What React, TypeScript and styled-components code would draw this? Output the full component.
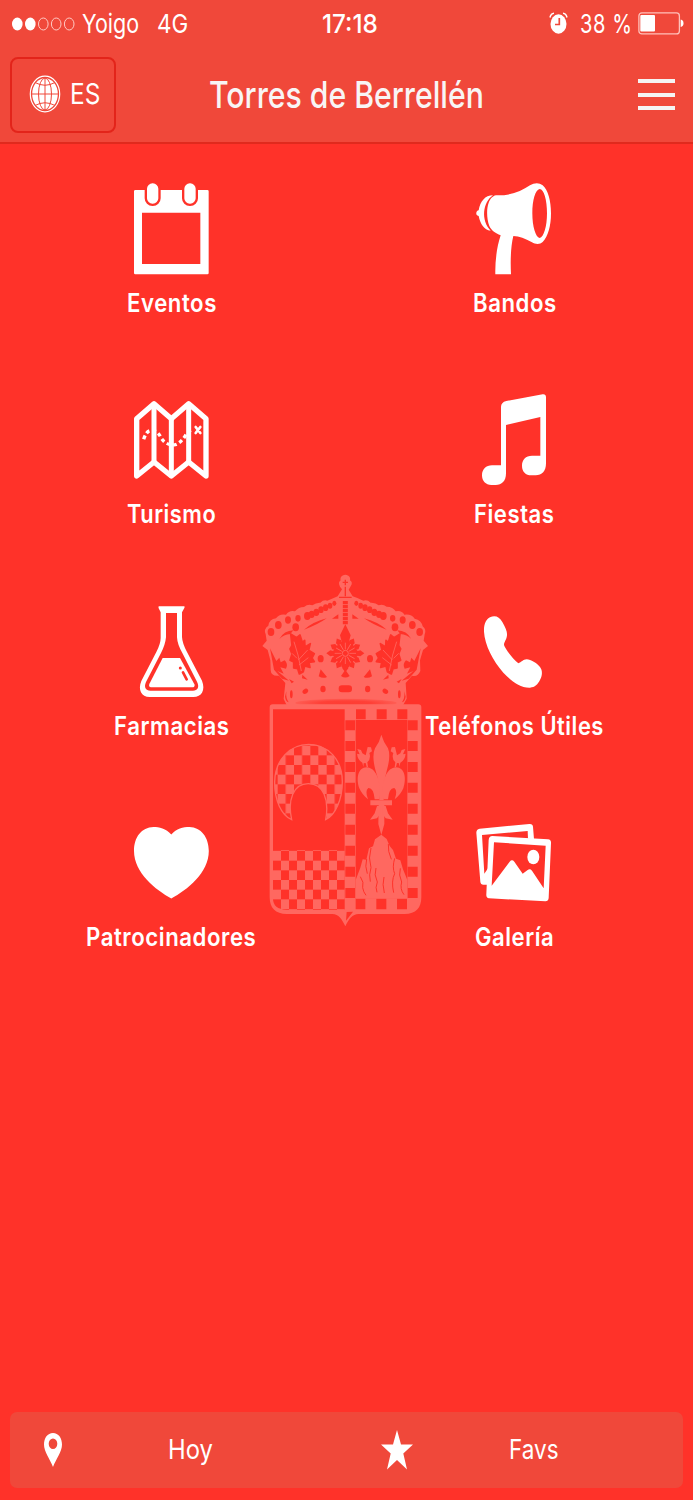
import React, { useLayoutEffect, useRef, useState } from "react";
import styled, { createGlobalStyle } from "styled-components";

const RED = "#ff3229";
const BAR = "#f0483a";
const CREST = "#ff6860";

const GlobalStyle = createGlobalStyle`
  * { box-sizing: border-box; }
  body {
    margin: 0;
    background: ${RED};
    color: #fff;
    font-family: Inter, "Liberation Sans", sans-serif;
  }
`;

const Screen = styled.div`
  position: relative;
  display: flex;
  flex-direction: column;
  width: 693px;
  height: 1500px;
  overflow: hidden;
  background: ${RED};
`;

const Header = styled.header`
  height: 144px;
  background: ${BAR};
  border-bottom: 2px solid #e02a1d;
`;

const StatusBar = styled.div`
  display: grid;
  grid-template-columns: 1fr 56px 1fr;
  align-items: center;
  height: 47px;
  padding: 0 9px 0 12px;
`;

const StatusGroup = styled.div<{ $end?: boolean }>`
  display: flex;
  align-items: center;
  justify-content: ${(p) => (p.$end ? "flex-end" : "flex-start")};
`;

const Signal = styled.svg`
  margin-right: 7px;
`;

const Carrier = styled.div`
  display: flex;
  gap: 18px;
`;

const Clock = styled.div`
  margin-left: 2px;
`;

const Charge = styled.div`
  margin: 0 6px 0 12px;
`;

const NavBar = styled.div`
  display: flex;
  align-items: center;
  justify-content: space-between;
  height: 95px;
  padding: 0 18px 0 10px;
`;

const LangButton = styled.button`
  display: flex;
  align-items: center;
  gap: 9px;
  width: 106px;
  height: 76px;
  padding: 0 0 2px 17px;
  border: 2px solid #e3241a;
  border-radius: 8px;
  background: transparent;
  color: inherit;
  font-family: inherit;
`;

const Title = styled.h1`
  margin: 0 0 0 -61px;
  color: #f8f5f5;
`;

const MenuButton = styled.div`
  display: flex;
  flex-direction: column;
  gap: 9.5px;
  width: 37px;
`;

const MenuLine = styled.span`
  height: 4px;
  background: #f5f3f3;
`;

const Grid = styled.main`
  position: relative;
  display: grid;
  grid-template-columns: 342.7px 342.7px;
  grid-auto-rows: 211.3px;
  padding-top: 37px;
  flex: 1;
  align-content: start;
`;

const Item = styled.div`
  display: flex;
  flex-direction: column;
  align-items: center;
  gap: 9px;
`;

const Icon = styled.svg`
  width: 80px;
  height: 96px;
  fill: #fff;
`;

const CrestMark = styled.svg`
  position: absolute;
  left: 250px;
  top: 565px;
  width: 190px;
  height: 375px;
`;

const TabBar = styled.nav`
  display: grid;
  grid-template-columns: 1fr 1fr;
  height: 76px;
  margin: 0 10px 12px;
  padding-bottom: 2px;
  border-radius: 7px;
  background: ${BAR};
`;

const Tab = styled.div<{ $pad: number; $gap: number }>`
  display: flex;
  align-items: center;
  gap: ${(p) => p.$gap}px;
  padding-left: ${(p) => p.$pad}px;

  svg {
    margin-top: 1px;
  }
`;

const TextBox = styled.span<{ $w: number; $size: number; $weight: number; $track: number }>`
  display: block;
  width: ${(p) => p.$w}px;
  height: 34px;
  line-height: 34px;
  font-size: ${(p) => p.$size}px;
  font-weight: ${(p) => p.$weight};
  letter-spacing: ${(p) => p.$track}em;
  white-space: nowrap;
`;

const Stretched = styled.span`
  display: inline-block;
  transform-origin: 0 50%;
`;

type TallTextProps = { w: number; size: number; weight?: number; track?: number; children: string };

// condensed text: the glyphs are squeezed until the line is exactly `w` wide
const TallText = ({ w, size, weight = 400, track = 0, children }: TallTextProps) => {
  const ref = useRef<HTMLSpanElement>(null);
  const [scale, setScale] = useState(1);

  useLayoutEffect(() => {
    if (ref.current) setScale(w / (ref.current.offsetWidth - track * size));
  }, [w, size, track, children]);

  return (
    <TextBox $w={w} $size={size} $weight={weight} $track={track}>
      <Stretched ref={ref} style={{ transform: `scaleX(${scale})` }}>
        {children}
      </Stretched>
    </TextBox>
  );
};

const Calendar = () => (
  <Icon viewBox="153 33 240 288">
    <path fillRule="evenodd" d="M166 60H382Q386 60 386 64V309Q386 313 382 313H166Q162 313 162 309V64Q162 60 166 60ZM186 128V282H361V128Z" />
    <g stroke={RED} strokeWidth="7">
      <rect x="197.500" y="36.500" width="41" height="68" rx="20" />
      <rect x="309.500" y="36.500" width="41" height="68" rx="20" />
    </g>
  </Icon>
);

const Megaphone = () => (
  <Icon viewBox="162 33 240 288">
    <path
      fillRule="evenodd"
      d="M228 76C272 77 302 65 330 46C343 38 357 37 368 46C384 60 393 92 393 130C393 168 384 200 368 216C360 224 346 223 336 217C315 205 298 199 280 198C272 230 271 275 273 313H226C225 275 230 232 242 196C226 190 213 180 208 168C200 148 199 116 206 98C211 87 217 78 228 76ZM359 57C346 60 337 90 337 130C337 170 347 202 359 204C371 202 381 170 381 130C381 90 372 58 359 57Z"
    />
    <path d="M219 76C188 96 182 152 212 182C192 180 181 162 176 138C170 137 168 133 169 129C169 125 172 122 176 121C181 94 195 76 219 76Z" />
  </Icon>
);

const TreasureMap = () => (
  <Icon viewBox="153 22 240 288">
    <g fill="none" stroke="#fff" strokeLinejoin="round" strokeLinecap="round">
      <path strokeWidth="16" d="M170 102L222 57L274 102L326 57L378 102V274L326 232L274 274L222 232L170 274Z" />
      <path strokeWidth="15" d="M222 60V230M274 104V272M326 60V230" />
      <path strokeWidth="10" strokeLinecap="butt" strokeDasharray="11 9" d="M191 164Q199 140 210 138Q232 134 244 161Q260 184 286 180Q304 174 318 150Q328 135 340 135" />
      <path strokeWidth="8" d="M347 127L361 145M361 127L347 145" />
    </g>
  </Icon>
);

const Music = () => (
  <Icon viewBox="162 22 240 288">
    <path d="M259 49L368 29Q378 28 378 38V236C378 260 366 272 347 272H334C317 272 306 261 306 243C306 225 317 213 336 213H361V97L258 121V266C258 290 245 301 227 301H214C197 301 186 289 186 272C186 254 198 242 216 242H243V67Q243 53 259 49Z" />
  </Icon>
);

const Flask = () => (
  <Icon viewBox="153 26 240 288">
    <path
      fillRule="evenodd"
      d="M237 33H312Q316 33 313 38L306 51V125Q307 144 321 170L366 256C377 284 365 305 340 305H209C184 305 173 283 184 257L229 170Q242 145 242 128V51L236 39Q234 33 237 33ZM258 53V126Q256 148 243 173L198 260C191 276 197 286 211 286H339C353 286 359 275 351 259L307 173Q292 147 291 126V53Z"
    />
    <path d="M248 188H300L344 268Q344 276 337 276H213Q205 275 208 266Z" />
    <g stroke={RED} strokeLinecap="round" fill={RED}>
      <path strokeWidth="8" d="M309 231L320 252" />
      <circle cx="301" cy="218" r="4.500" stroke="none" />
    </g>
  </Icon>
);

const Phone = () => (
  <Icon viewBox="162 11 240 288">
    <path d="M210 51C225 44 238 49 247 65C257 83 262 93 261 105C260 118 252 125 252 134C255 145 278 175 295 189C304 186 309 177 320 177C333 178 350 188 360 200C368 211 367 224 361 237C353 253 345 261 330 262C300 263 274 241 250 217C219 181 194 134 192 94C191 70 199 56 210 51Z" />
  </Icon>
);

const Heart = () => (
  <Icon viewBox="0 0 80 96">
    <path d="M40.300 19.500C35 13.500 28 12 22.500 12C10.500 12.500 3 22 3 36C3 58 25 75 40.300 83.500C56 75 77.800 58 77.800 36C77.800 22 70 12.500 58.500 12C52 12 45.500 13.500 40.300 19.500Z" />
  </Icon>
);

const Gallery = () => (
  <Icon viewBox="162 15 240 288">
    <path d="M179 56L328 42Q338 41 339 50L342 88L324 86L323 63L186 75L193 191L206 172L202 224L190 224Q182 224 181 215L169 68Q169 57 179 56Z" />
    <path fillRule="evenodd" d="M217 78L384 88Q394 89 393 100L386 264Q385 274 376 274L207 265Q198 264 199 253L206 90Q207 78 217 78ZM222 97L215 227L269 155Q276 147 283 155L308 191L323 180Q330 175 336 182L371 235L377 107Z" />
    <ellipse cx="340" cy="141" rx="18" ry="22" />
  </Icon>
);

const Globe = () => (
  <svg width="32" height="38" viewBox="0 0 32 38">
    <ellipse cx="16" cy="19" rx="14.700" ry="17.800" fill="none" stroke="#fff" strokeWidth="1.200" />
    <ellipse cx="16" cy="19" rx="12.800" ry="15.800" fill="#fff" />
    <g fill="none" stroke={BAR} strokeWidth="1">
      <path d="M16 2V36M2 19H30M6 7.500Q16 13 26 7.500M6 30.500Q16 25 26 30.500" />
      <ellipse cx="16" cy="19" rx="6.500" ry="16" />
    </g>
  </svg>
);

const AlarmClock = () => (
  <svg width="19" height="23" viewBox="0 0 19 23">
    <ellipse cx="9.500" cy="12" rx="8" ry="9.700" fill="#fff" />
    <path d="M1 5.500Q2 1.500 5 1.300M18 5.500Q17 1.500 14 1.300" fill="none" stroke="#fff" strokeWidth="1.500" />
    <path d="M10.300 6V12.500H6" fill="none" stroke={BAR} strokeWidth="1.700" />
  </svg>
);

const Battery = () => (
  <svg width="46" height="23" viewBox="0 0 46 23">
    <rect x="0.900" y="0.900" width="40.500" height="21" rx="3" fill="none" stroke="#ffc0b9" strokeWidth="1.300" />
    <rect x="2.300" y="3" width="14.700" height="16.500" rx="1" fill="#fff" />
    <path d="M42.700 7.500Q45.500 8 45.500 11.300T42.700 15Z" fill="#fff" />
  </svg>
);

const petals = [0, 30, 60, 90, 120, 150, 180, 210, 240, 270, 300, 330];
const beads = [[63, 201, 10], [85, 180, 10], [114, 165, 9], [144, 160, 8], [137, 187, 10], [172, 153, 10], [185, 148, 9], [199, 142, 9], [213, 134, 8], [227, 128, 8], [240, 122, 7], [253, 115, 6]];
const studs = [-59, 3, 66, 128, 191, 254, 317, 380, 444];

const HalfCrown = () => (
  <g fill={RED}>
    {beads.map(([x, y, r]) => (
      <ellipse key={x} cx={x} cy={y} rx={r} ry={r + 2} />
    ))}
    <path d="M88 222Q102 197 130 196L121 207Q101 208 88 222ZM162 194Q190 170 230 160Q202 180 162 194ZM246 161L265 148V161Z" />
    <path stroke={RED} strokeWidth="5" strokeLinejoin="round" d="M122 207L140 218L150 210L157 232L164 226L165 246L181 236L176 256L193 266L186 279L193 290L177 292L180 307L164 303L160 320L148 327L143 311L131 309V291L120 286L126 267L120 252L126 241Z" />
    <path d="M60 250L79 288L88 278L92 292L104 286Q116 298 108 311L91 307L101 326L82 318L117 347L96 341L72 314Z" />
    <ellipse cx="212" cy="281" rx="9" ry="11" />
    <path d="M212 313L231 336Q219 342 206 334ZM157 329L173 344L156 340ZM117 342L132 350L125 355Z" />
    <ellipse cx="219" cy="372" rx="8" ry="10" />
    <ellipse cx="166" cy="379" rx="9" ry="7" transform="rotate(-35 166 379)" />
    <ellipse cx="124" cy="388" rx="4" ry="12" />
    <path d="M109 379Q107 400 116 412Q107 409 105 395Z" />
    <g stroke={CREST} strokeWidth="2.500" fill="none">
      <path d="M154 318L144 270L132 230M145 285L173 255M147 300L175 278M141 280L126 265" />
    </g>
  </g>
);

const HalfField = () => (
  <g>
    <path d="M390 165C392 120 377 83 350 82C323 82 318 117 328 145Q336 164 354 178Q344 153 355 144Q371 143 374 178H388Z" />
    <path d="M322 27L333 30L337 40L347 46L353 21L363 22L366 34L358 39Q364 56 352 67L354 81H350L347 69L341 70L340 81L337 68Q323 60 321 41L329 43Z" />
    <path d="M381 198L374 220L360 239L381 235L391 221V198Z" />
  </g>
);

const Crest = () => (
  <CrestMark viewBox="0 0 570 1125">
    <defs>
      <pattern id="checks" x="69" y="333" width="48" height="58" patternUnits="userSpaceOnUse">
        <path fill={CREST} d="M0 0H24V29H0zM24 29H48V58H24z" />
      </pattern>
      <pattern id="moonChecks" x="83" y="17" width="49" height="58" patternUnits="userSpaceOnUse">
        <path fill={CREST} d="M24 0H49V29H24zM0 29H24V58H0z" />
      </pattern>
      <radialGradient id="rim">
        <stop offset="0" stopColor="#ff3c33" />
        <stop offset="0.5" stopColor="#ff4037" />
        <stop offset="1" stopColor="#ff5d54" />
      </radialGradient>
    </defs>

    {/* crown */}
    <path
      fill={CREST}
      d="M286 29C298 30 302 38 300 46Q310 52 302 64L296 74L308 94Q328 101 340 107Q352 103 362 113Q377 112 386 121Q398 116 410 125Q429 125 437 139Q455 135 463 149Q484 146 494 161Q514 165 518 184Q530 193 524 208L521 227L534 243L519 255L510 286L511 318Q503 337 486 332L467 354L470 401L459 421H110L101 402L106 354L87 332Q63 335 62 315L61 286L53 255L37 243L50 227L47 208Q40 192 55 182Q58 163 78 160Q88 145 108 149Q118 135 135 139Q146 126 162 126Q174 116 187 121Q199 112 211 113Q221 103 232 107Q248 101 263 94L276 73L270 65Q263 52 272 46C270 38 274 30 286 29Z"
    />
    <path d="M286 44V61M278 52H294M286 65V94M267 97H305" fill="none" stroke={RED} strokeWidth="4" />
    <HalfCrown />
    <g transform="translate(572 0) scale(-1 1)">
      <HalfCrown />
    </g>
    <path d="M286 108V178" stroke={RED} strokeWidth="15" strokeDasharray="10 2" />
    <g fill={RED}>
      {petals.map((a) => (
        <path key={a} transform={`translate(286 265) rotate(${a}) scale(1 ${a % 90 === 0 ? 1 : 0.9})`} d="M0 0L-9 -25L-14 -31L-7 -37L-9 -45L0 -57L9 -45L7 -37L14 -31L9 -25Z" />
      ))}
      <path d="M286 178L302 211L294 240H278L270 211ZM286 314L299 333Q286 342 273 333ZM275 286H297L298 304L286 318L274 304Z" />
      <rect x="266" y="361" width="40" height="21" rx="10" />
    </g>
    <g stroke={CREST} strokeWidth="2.500">
      {petals.map((a) => (
        <path key={a} transform={`translate(286 265) rotate(${a})`} d="M0 -12V-32" />
      ))}
    </g>
    <circle cx="286" cy="265" r="9" fill={RED} stroke={CREST} strokeWidth="3" />
    <ellipse cx="288" cy="414" rx="152" ry="13" fill="url(#rim)" />

    {/* shield */}
    <g transform="translate(0 525)">
      <path
        fill={CREST}
        d="M59 -98Q59 -107 68 -107H505Q514 -107 514 -98V472C514 504 498 522 464 522H326C307 522 296 538 286 559C276 538 266 522 247 522H110C76 522 59 504 59 472Z"
      />
      <path fill={RED} d="M69 -92H284V331H69zM317 -60H472V475H317zM290 516L309 515L288 542Z" />
      <path fill={RED} d="M69 331H284V509H110Q69 509 69 475Z" />
      <path fill="url(#checks)" d="M69 331H284V509H110Q69 509 69 475Z" />
      <g fill={RED}>
        {studs.map((y) => (
          <path key={y} d={`M286 ${y}H315V${y + 30}H286zM473 ${y}H503V${y + 30}H473z`} />
        ))}
        <path d="M318 -92H347V-62H318zM380 -92H410V-62H380zM442 -92H472V-62H442z" />
      </g>
      <path fill={RED} d="M317 475H346V508H317zM379 475H409V508H379zM441 475H471V508H441z" />

      <path
        fill="url(#moonChecks)"
        stroke={CREST}
        strokeWidth="4"
        d="M125 239C94 226 73 180 74 125C75 60 120 13 176 13C235 13 277 60 277 125C277 180 255 226 227 239C238 180 221 131 175 131C130 131 112 180 125 239Z"
      />

      <g fill={CREST}>
        <path d="M394 -16Q400 5 414 25Q423 47 411 89Q401 122 401 180H388Q388 122 376 89Q365 47 375 25Q389 5 394 -16ZM361 181H426V196H361zM386 196H403V252L394 285L385 252Z" />
        <HalfField />
        <g transform="translate(788 0) scale(-1 1)">
          <HalfField />
        </g>
        <path d="M394 284L410 297L419 318L429 330L438 356L451 361L459 388L472 420V476H317V420L331 383L338 358L349 359L357 325L369 319L375 298Z" />
      </g>
      <g fill="none" stroke={RED} strokeWidth="3">
        <path d="M350 357Q344 379 352 401M363 324Q354 354 363 383Q356 405 361 425M415 312Q413 334 424 358M434 355Q426 383 434 401Q423 423 431 458M451 385Q445 405 455 426Q449 447 462 464M378 384Q371 404 382 426Q375 443 381 457M402 411Q396 433 403 459M331 410Q343 427 338 443Q340 456 348 466" />
      </g>
    </g>
  </CrestMark>
);

const items = [
  { label: "Eventos", w: 89, icon: <Calendar /> },
  { label: "Bandos", w: 83, icon: <Megaphone /> },
  { label: "Turismo", w: 89, icon: <TreasureMap /> },
  { label: "Fiestas", w: 80, icon: <Music /> },
  { label: "Farmacias", w: 115, icon: <Flask /> },
  { label: "Teléfonos Útiles", w: 178, icon: <Phone /> },
  { label: "Patrocinadores", w: 170, icon: <Heart /> },
  { label: "Galería", w: 79, icon: <Gallery /> },
];

const App = () => (
  <Screen>
    <GlobalStyle />
    <Crest />

    <Header>
      <StatusBar>
        <StatusGroup>
          <Signal width="63" height="14" viewBox="0 0 63 14">
            {[5.3, 18.3, 31.3, 44.2, 57.2].map((x, i) => (
              <ellipse key={x} cx={x} cy="7" rx={i < 2 ? 5.3 : 4.8} ry={i < 2 ? 6.5 : 6} fill={i < 2 ? "#fff" : "none"} stroke="#ffc9c3" strokeWidth={i < 2 ? 0 : 1} />
            ))}
          </Signal>
          <Carrier>
            <TallText w={57} size={26}>Yoigo</TallText>
            <TallText w={31} size={26}>4G</TallText>
          </Carrier>
        </StatusGroup>
        <Clock>
          <TallText w={56} size={26} weight={500}>17:18</TallText>
        </Clock>
        <StatusGroup $end>
          <AlarmClock />
          <Charge>
            <TallText w={52} size={26} track={0.03}>38 %</TallText>
          </Charge>
          <Battery />
        </StatusGroup>
      </StatusBar>

      <NavBar>
        <LangButton>
          <Globe />
          <TallText w={30} size={28.500}>ES</TallText>
        </LangButton>
        <Title>
          <TallText w={275} size={37} weight={500}>Torres de Berrellén</TallText>
        </Title>
        <MenuButton>
          <MenuLine />
          <MenuLine />
          <MenuLine />
        </MenuButton>
      </NavBar>
    </Header>

    <Grid>
      {items.map((item) => (
        <Item key={item.label}>
          {item.icon}
          <TallText w={item.w} size={25.500} weight={600} track={0.025}>{item.label}</TallText>
        </Item>
      ))}
    </Grid>

    <TabBar>
      <Tab $pad={33} $gap={105}>
        <svg width="20" height="36" viewBox="0 0 20 36">
          <path fill="#fff" fillRule="evenodd" d="M10 1C4.500 1 1 6 1 12.500C1 20 7 27 10 35C13 27 19 20 19 12.500C19 6 15.500 1 10 1ZM10 6.500A4.300 5.300 0 1 1 10 17.100A4.300 5.300 0 1 1 10 6.500Z" />
        </svg>
        <TallText w={45} size={27.500}>Hoy</TallText>
      </Tab>
      <Tab $pad={34} $gap={96}>
        <svg width="32" height="40" viewBox="0 0 32 40">
          <path fill="#fff" d="M16 0L20 14.500H32L22.300 23.500L26 39.500L16 30L6 39.500L9.700 23.500L0 14.500H12Z" />
        </svg>
        <TallText w={50} size={27.500}>Favs</TallText>
      </Tab>
    </TabBar>
  </Screen>
);

export default App;
